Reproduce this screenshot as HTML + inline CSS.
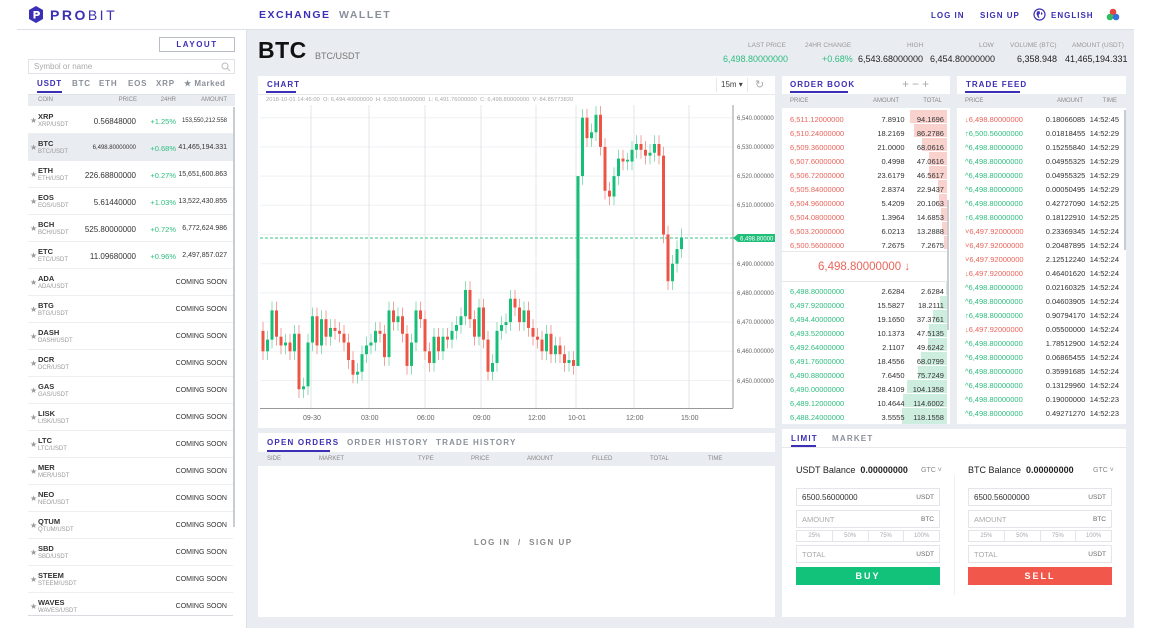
<!DOCTYPE html>
<html><head><meta charset="utf-8">
<style>
*{box-sizing:border-box;margin:0;padding:0}
body{width:1152px;height:628px;overflow:hidden;background:#fff;font-family:"Liberation Sans",sans-serif;color:#333;position:relative}
.a{position:absolute;white-space:nowrap}
.pur{color:#3b2fb5}
.gray{color:#999}
.bold{font-weight:bold}
.ls{letter-spacing:1.5px}
.panel{position:absolute;background:#fff}
.r{text-align:right}
.row{position:absolute;left:0;width:100%;font-size:7.5px}
.grn{color:#2ebd7f}.red{color:#e8645a}
</style></head><body>
<!-- header -->
<div class="a" style="left:17px;top:29px;width:1117px;height:1px;background:#dde0e6"></div>
<svg class="a" style="left:28px;top:6px" width="16" height="17" viewBox="0 0 16 17"><path d="M8 0L15 4V13L8 17L1 13V4Z" fill="#3b2fb5"/><path d="M5.5 5H9.5A2.5 2.5 0 0 1 9.5 10H7.5V12.5H5.5Z" fill="#fff"/><rect x="7.5" y="6.8" width="2" height="1.6" fill="#3b2fb5"/></svg>
<div class="a pur" style="left:50px;top:7px;font-size:14px;letter-spacing:2.5px"><b>PRO</b>BIT</div>
<div class="a pur bold ls" style="left:259px;top:9px;font-size:10.5px">EXCHANGE</div>
<div class="a bold ls" style="left:339px;top:9px;font-size:10.5px;color:#8a8f99">WALLET</div>
<div class="a pur bold" style="left:931px;top:11px;font-size:8px;letter-spacing:1px">LOG IN</div>
<div class="a pur bold" style="left:980px;top:11px;font-size:8px;letter-spacing:1px">SIGN UP</div>
<svg class="a" style="left:1033px;top:8px" width="13" height="13" viewBox="0 0 13 13"><circle cx="6.5" cy="6.5" r="5.5" fill="none" stroke="#3b2fb5" stroke-width="1.2"/><path d="M4 3.5L6.5 3L7 5.5L5.5 7L6.5 10L5 9.5L3.5 6Z" fill="#3b2fb5"/><path d="M8 4L9.5 5L9 7L8 6.5Z" fill="#3b2fb5"/></svg>
<div class="a pur bold" style="left:1051px;top:11px;font-size:8px;letter-spacing:1px">ENGLISH</div>
<svg class="a" style="left:1106px;top:8px" width="14" height="13"><circle cx="7" cy="4" r="3.3" fill="#e8453c"/><circle cx="4" cy="9" r="3.3" fill="#2ebd5f"/><circle cx="10" cy="9" r="3.3" fill="#3b6fd8"/></svg>

<!-- gray main -->
<div class="a" style="left:247px;top:30px;width:887px;height:598px;background:#e9ecf1"></div>
<div class="a" style="left:246px;top:30px;width:1px;height:598px;background:#dde0e6"></div>

<!-- sidebar -->
<div class="a pur bold" style="left:159px;top:37px;width:76px;height:15px;border:1px solid #b9bdc7;font-size:8px;letter-spacing:1.5px;text-align:center;line-height:13px">LAYOUT</div>
<div class="a" style="left:28px;top:59px;width:207px;height:15px;border:1px solid #dfe2e7;font-size:8px;color:#aaa;padding-left:5px;line-height:13px">Symbol or name</div>
<svg class="a" style="left:221px;top:62px" width="10" height="10"><circle cx="4" cy="4" r="3" fill="none" stroke="#bbb"/><path d="M6.3 6.3L9 9" stroke="#bbb"/></svg>
<div class="a bold" style="left:0;top:79px;font-size:8px;letter-spacing:0.8px;color:#8a8f99;width:246px;height:10px">
<span class="a pur" style="left:37px">USDT</span><span class="a" style="left:72px">BTC</span><span class="a" style="left:99px">ETH</span><span class="a" style="left:128px">EOS</span><span class="a" style="left:156px">XRP</span><span class="a" style="left:184px;letter-spacing:0.5px">★ Marked</span></div>
<div class="a" style="left:37px;top:91px;width:25px;height:2px;background:#3b2fb5"></div>
<div class="a" style="left:28px;top:94px;width:207px;height:1px;background:#dfe2e7"></div>
<div class="a" style="left:28px;top:95px;width:207px;height:11px;background:#e9ecf1;font-size:6px;color:#888">
<span class="a" style="left:10px;top:2px">COIN</span><span class="a" style="right:98px;top:2px">PRICE</span><span class="a" style="right:59px;top:2px">24HR</span><span class="a" style="right:8px;top:2px">AMOUNT</span></div>
<div class="a" style="left:233px;top:107px;width:2px;height:420px;background:#c8ccd3"></div>
<div class="a" style="left:28px;top:107px;width:205px;height:510px" id="side">
<div class="row" style="top:0;height:27px;border-bottom:1px solid #eceef1"><span class="a gray" style="left:2px;top:9px;font-size:8px">★</span><span class="a bold" style="left:10px;top:5px;font-size:7.5px;color:#333">XRP</span><span class="a gray" style="left:10px;top:15px;font-size:6px">XRP/USDT</span><span class="a" style="right:97px;top:10px;font-size:8px">0.56848000</span><span class="a grn" style="right:57px;top:10px;font-size:7.5px">+1.25%</span><span class="a" style="right:6px;top:11px;font-size:6px">153,550,212.558</span></div>
<div class="row" style="top:27px;height:27px;background:#e9ecf1"><span class="a gray" style="left:2px;top:9px;font-size:8px">★</span><span class="a bold" style="left:10px;top:5px;font-size:7.5px">BTC</span><span class="a gray" style="left:10px;top:15px;font-size:6px">BTC/USDT</span><span class="a" style="right:97px;top:11px;font-size:6px">6,498.80000000</span><span class="a grn" style="right:57px;top:10px;font-size:7.5px">+0.68%</span><span class="a" style="right:6px;top:10px;font-size:7px">41,465,194.331</span></div>
<div class="row" style="top:54px;height:27px;border-bottom:1px solid #eceef1"><span class="a gray" style="left:2px;top:9px;font-size:8px">★</span><span class="a bold" style="left:10px;top:5px;font-size:7.5px">ETH</span><span class="a gray" style="left:10px;top:15px;font-size:6px">ETH/USDT</span><span class="a" style="right:97px;top:10px;font-size:8px">226.68800000</span><span class="a grn" style="right:57px;top:10px;font-size:7.5px">+0.27%</span><span class="a" style="right:6px;top:10px;font-size:7px">15,651,600.863</span></div>
<div class="row" style="top:81px;height:27px;border-bottom:1px solid #eceef1"><span class="a gray" style="left:2px;top:9px;font-size:8px">★</span><span class="a bold" style="left:10px;top:5px;font-size:7.5px">EOS</span><span class="a gray" style="left:10px;top:15px;font-size:6px">EOS/USDT</span><span class="a" style="right:97px;top:10px;font-size:8px">5.61440000</span><span class="a grn" style="right:57px;top:10px;font-size:7.5px">+1.03%</span><span class="a" style="right:6px;top:10px;font-size:7px">13,522,430.855</span></div>
<div class="row" style="top:108px;height:27px;border-bottom:1px solid #eceef1"><span class="a gray" style="left:2px;top:9px;font-size:8px">★</span><span class="a bold" style="left:10px;top:5px;font-size:7.5px">BCH</span><span class="a gray" style="left:10px;top:15px;font-size:6px">BCH/USDT</span><span class="a" style="right:97px;top:10px;font-size:8px">525.80000000</span><span class="a grn" style="right:57px;top:10px;font-size:7.5px">+0.72%</span><span class="a" style="right:6px;top:10px;font-size:7px">6,772,624.986</span></div>
<div class="row" style="top:135px;height:27px;border-bottom:1px solid #eceef1"><span class="a gray" style="left:2px;top:9px;font-size:8px">★</span><span class="a bold" style="left:10px;top:5px;font-size:7.5px">ETC</span><span class="a gray" style="left:10px;top:15px;font-size:6px">ETC/USDT</span><span class="a" style="right:97px;top:10px;font-size:8px">11.09680000</span><span class="a grn" style="right:57px;top:10px;font-size:7.5px">+0.96%</span><span class="a" style="right:6px;top:10px;font-size:7px">2,497,857.027</span></div>
<div class="row" style="top:162px;height:27px;border-bottom:1px solid #eceef1"><span class="a gray" style="left:2px;top:9px;font-size:8px">★</span><span class="a bold" style="left:10px;top:5px;font-size:7.5px">ADA</span><span class="a gray" style="left:10px;top:15px;font-size:6px">ADA/USDT</span><span class="a" style="right:6px;top:10px;font-size:7px">COMING SOON</span></div>
<div class="row" style="top:189px;height:27px;border-bottom:1px solid #eceef1"><span class="a gray" style="left:2px;top:9px;font-size:8px">★</span><span class="a bold" style="left:10px;top:5px;font-size:7.5px">BTG</span><span class="a gray" style="left:10px;top:15px;font-size:6px">BTG/USDT</span><span class="a" style="right:6px;top:10px;font-size:7px">COMING SOON</span></div>
<div class="row" style="top:216px;height:27px;border-bottom:1px solid #eceef1"><span class="a gray" style="left:2px;top:9px;font-size:8px">★</span><span class="a bold" style="left:10px;top:5px;font-size:7.5px">DASH</span><span class="a gray" style="left:10px;top:15px;font-size:6px">DASH/USDT</span><span class="a" style="right:6px;top:10px;font-size:7px">COMING SOON</span></div>
<div class="row" style="top:243px;height:27px;border-bottom:1px solid #eceef1"><span class="a gray" style="left:2px;top:9px;font-size:8px">★</span><span class="a bold" style="left:10px;top:5px;font-size:7.5px">DCR</span><span class="a gray" style="left:10px;top:15px;font-size:6px">DCR/USDT</span><span class="a" style="right:6px;top:10px;font-size:7px">COMING SOON</span></div>
<div class="row" style="top:270px;height:27px;border-bottom:1px solid #eceef1"><span class="a gray" style="left:2px;top:9px;font-size:8px">★</span><span class="a bold" style="left:10px;top:5px;font-size:7.5px">GAS</span><span class="a gray" style="left:10px;top:15px;font-size:6px">GAS/USDT</span><span class="a" style="right:6px;top:10px;font-size:7px">COMING SOON</span></div>
<div class="row" style="top:297px;height:27px;border-bottom:1px solid #eceef1"><span class="a gray" style="left:2px;top:9px;font-size:8px">★</span><span class="a bold" style="left:10px;top:5px;font-size:7.5px">LISK</span><span class="a gray" style="left:10px;top:15px;font-size:6px">LISK/USDT</span><span class="a" style="right:6px;top:10px;font-size:7px">COMING SOON</span></div>
<div class="row" style="top:324px;height:27px;border-bottom:1px solid #eceef1"><span class="a gray" style="left:2px;top:9px;font-size:8px">★</span><span class="a bold" style="left:10px;top:5px;font-size:7.5px">LTC</span><span class="a gray" style="left:10px;top:15px;font-size:6px">LTC/USDT</span><span class="a" style="right:6px;top:10px;font-size:7px">COMING SOON</span></div>
<div class="row" style="top:351px;height:27px;border-bottom:1px solid #eceef1"><span class="a gray" style="left:2px;top:9px;font-size:8px">★</span><span class="a bold" style="left:10px;top:5px;font-size:7.5px">MER</span><span class="a gray" style="left:10px;top:15px;font-size:6px">MER/USDT</span><span class="a" style="right:6px;top:10px;font-size:7px">COMING SOON</span></div>
<div class="row" style="top:378px;height:27px;border-bottom:1px solid #eceef1"><span class="a gray" style="left:2px;top:9px;font-size:8px">★</span><span class="a bold" style="left:10px;top:5px;font-size:7.5px">NEO</span><span class="a gray" style="left:10px;top:15px;font-size:6px">NEO/USDT</span><span class="a" style="right:6px;top:10px;font-size:7px">COMING SOON</span></div>
<div class="row" style="top:405px;height:27px;border-bottom:1px solid #eceef1"><span class="a gray" style="left:2px;top:9px;font-size:8px">★</span><span class="a bold" style="left:10px;top:5px;font-size:7.5px">QTUM</span><span class="a gray" style="left:10px;top:15px;font-size:6px">QTUM/USDT</span><span class="a" style="right:6px;top:10px;font-size:7px">COMING SOON</span></div>
<div class="row" style="top:432px;height:27px;border-bottom:1px solid #eceef1"><span class="a gray" style="left:2px;top:9px;font-size:8px">★</span><span class="a bold" style="left:10px;top:5px;font-size:7.5px">SBD</span><span class="a gray" style="left:10px;top:15px;font-size:6px">SBD/USDT</span><span class="a" style="right:6px;top:10px;font-size:7px">COMING SOON</span></div>
<div class="row" style="top:459px;height:27px;border-bottom:1px solid #eceef1"><span class="a gray" style="left:2px;top:9px;font-size:8px">★</span><span class="a bold" style="left:10px;top:5px;font-size:7.5px">STEEM</span><span class="a gray" style="left:10px;top:15px;font-size:6px">STEEM/USDT</span><span class="a" style="right:6px;top:10px;font-size:7px">COMING SOON</span></div>
<div class="row" style="top:486px;height:23px;border-bottom:1px solid #d8dbe0"><span class="a gray" style="left:2px;top:9px;font-size:8px">★</span><span class="a bold" style="left:10px;top:5px;font-size:7.5px">WAVES</span><span class="a gray" style="left:10px;top:15px;font-size:6px">WAVES/USDT</span><span class="a" style="right:6px;top:10px;font-size:7px">COMING SOON</span></div>
</div>

<!-- title & stats -->
<div class="a bold" style="left:258px;top:37px;font-size:23px;letter-spacing:0.5px;color:#111">BTC</div>
<div class="a" style="left:315px;top:51px;font-size:9px;color:#777">BTC/USDT</div>
<div class="a gray" style="left:748px;top:42px;font-size:6.5px">LAST PRICE</div>
<div class="a grn" style="left:723px;top:54px;font-size:9px">6,498.80000000</div>
<div class="a gray" style="left:805px;top:42px;font-size:6.5px">24HR CHANGE</div>
<div class="a grn" style="left:822px;top:54px;font-size:9px">+0.68%</div>
<div class="a gray" style="left:907px;top:42px;font-size:6.5px">HIGH</div>
<div class="a" style="left:858px;top:54px;font-size:9px;color:#222">6,543.68000000</div>
<div class="a gray" style="left:979px;top:42px;font-size:6.5px">LOW</div>
<div class="a" style="left:930px;top:54px;font-size:9px;color:#222">6,454.80000000</div>
<div class="a gray" style="left:1010px;top:42px;font-size:6.5px">VOLUME (BTC)</div>
<div class="a" style="left:1017px;top:54px;font-size:9px;color:#222">6,358.948</div>
<div class="a gray" style="left:1072px;top:42px;font-size:6.5px">AMOUNT (USDT)</div>
<div class="a" style="left:1065px;top:54px;font-size:9px;color:#222">41,465,194.331</div>

<!-- chart panel -->
<div class="panel" style="left:258px;top:76px;width:517px;height:352px"></div>
<div class="a pur bold" style="left:267px;top:80px;font-size:8px;letter-spacing:1px">CHART</div>
<div class="a" style="left:266px;top:91px;width:30px;height:2px;background:#3b2fb5"></div>
<div class="a" style="left:258px;top:94px;width:517px;height:1px;background:#e6e8ec"></div>
<div class="a" style="left:716px;top:78px;width:32px;height:14px;border-left:1px solid #e6e8ec;border-right:1px solid #e6e8ec;font-size:8px;color:#444;padding-left:4px;line-height:14px">15m ▾</div>
<div class="a" style="left:755px;top:78px;font-size:11px;color:#aaa">↻</div>
<div class="a" style="left:266px;top:97px;font-size:5.8px;color:#aaa">2018-10-01 14:45:00&nbsp; O: 6,494.40000000&nbsp; H: 6,500.56000000&nbsp; L: 6,491.76000000&nbsp; C: 6,498.80000000&nbsp; V: 84.85773820</div>
<svg class="a" style="left:0;top:0" width="780" height="430">
<g stroke="#eef0f2" stroke-width="1">
<path d="M260 117.7H733M260 146.9H733M260 176.1H733M260 205.3H733M260 234.5H733M260 263.7H733M260 292.9H733M260 322.1H733M260 351.3H733M260 380.5H733"/>
<path d="M311 105V408M369 105V408M425 105V408M481 105V408M536 105V408M576 105V408M634 105V408M689 105V408" stroke="#e2e4e8"/>
</g>
<path d="M260 408.5H733M733 105V408" stroke="#999" stroke-width="1"/>
<g font-size="6px" fill="#666" font-family="Liberation Sans">
<text x="737" y="120">6,540.000000</text><text x="737" y="149">6,530.000000</text><text x="737" y="178">6,520.000000</text><text x="737" y="207">6,510.000000</text><text x="737" y="266">6,490.000000</text><text x="737" y="295">6,480.000000</text><text x="737" y="324">6,470.000000</text><text x="737" y="353">6,460.000000</text><text x="737" y="383">6,450.000000</text>
<text x="303" y="420" font-size="7px">09-30</text><text x="361" y="420" font-size="7px">03:00</text><text x="417" y="420" font-size="7px">06:00</text><text x="473" y="420" font-size="7px">09:00</text><text x="528" y="420" font-size="7px">12:00</text><text x="568" y="420" font-size="7px">10-01</text><text x="626" y="420" font-size="7px">12:00</text><text x="681" y="420" font-size="7px">15:00</text>
</g>
<path d="M260 238H733" stroke="#3cc48a" stroke-dasharray="3 2" stroke-width="1"/>
<path d="M733 238L738 234H775V242H738Z" fill="#1fbf7a"/>
<text x="740" y="240.5" font-size="6px" fill="#fff" font-family="Liberation Sans">6,498.80000</text>
<g transform="matrix(1 0 0 -2.92 0 19214.5)">
<path fill="none" stroke="#8fdcb8" stroke-width="1" vector-effect="non-scaling-stroke" d="M267.5 6457V6467M272 6461V6477M285.5 6459V6466M294.5 6457V6469M303.5 6444V6451M308 6445V6466M312.5 6460V6475M321.5 6459V6474M330.5 6462V6471M357.5 6449V6456M362 6450V6462M366.5 6456V6465M371 6459V6466M375.5 6460V6470M389 6455V6477M398 6467V6475M411.5 6452V6466M416 6460V6477M434 6453V6468M443 6457V6468M452 6461V6470M456.5 6464V6472M461 6466V6475M465.5 6469V6484M479 6462V6478M492.5 6450V6459M497 6453V6470M501.5 6464V6472M506 6466V6473M510.5 6467V6481M524 6467V6477M546.5 6457V6469M555.5 6456V6465M569 6453V6460M578 6455V6520M582.5 6517V6543M591.5 6530V6538M596 6532V6544M614 6510V6523M618.5 6517V6529M627.5 6522V6528M632 6522V6532M636.5 6526V6534M650 6524V6531M654.5 6525V6534M672.5 6481V6493M677 6487V6498M681.5 6492V6502"/>
<path fill="none" stroke="#f0a39c" stroke-width="1" vector-effect="non-scaling-stroke" d="M263 6457V6470M276.5 6462V6477M281 6459V6468M290 6457V6466M299 6444V6469M317 6459V6475M326 6462V6474M335 6464V6471M339.5 6463V6470M344 6460V6469M348.5 6454V6466M353 6449V6460M380 6463V6470M384.5 6455V6469M393.5 6467V6477M402.5 6463V6475M407 6452V6469M420.5 6468V6477M425 6457V6474M429.5 6453V6463M438.5 6457V6468M447.5 6461V6468M470 6468V6484M474.5 6462V6474M483.5 6461V6478M488 6450V6467M515 6472V6481M519.5 6467V6478M528.5 6465V6477M533 6462V6471M537.5 6461V6468M542 6457V6467M551 6456V6469M560 6456V6465M564.5 6453V6462M573.5 6452V6460M587 6530V6543M600.5 6527V6544M605 6512V6533M609.5 6510V6518M623 6522V6529M641 6526V6534M645.5 6524V6532M659 6524V6534M663.5 6497V6530M668 6481V6503"/>
<g fill="#16bf78">
<rect x="266" y="6460" width="3" height="4"/><rect x="270.5" y="6464" width="3" height="10"/><rect x="284" y="6462" width="3" height="1"/><rect x="293" y="6460" width="3" height="6"/><rect x="302" y="6447" width="3" height="1"/><rect x="306.5" y="6448" width="3" height="15"/><rect x="311" y="6463" width="3" height="9"/><rect x="320" y="6462" width="3" height="9"/><rect x="329" y="6465" width="3" height="3"/><rect x="356" y="6452" width="3" height="1"/><rect x="360.5" y="6453" width="3" height="6"/><rect x="365" y="6459" width="3" height="3"/><rect x="369.5" y="6462" width="3" height="1"/><rect x="374" y="6463" width="3" height="4"/><rect x="387.5" y="6458" width="3" height="16"/><rect x="396.5" y="6470" width="3" height="2"/><rect x="410" y="6455" width="3" height="8"/><rect x="414.5" y="6463" width="3" height="11"/><rect x="432.5" y="6456" width="3" height="9"/><rect x="441.5" y="6460" width="3" height="5"/><rect x="450.5" y="6464" width="3" height="3"/><rect x="455" y="6467" width="3" height="2"/><rect x="459.5" y="6469" width="3" height="3"/><rect x="464" y="6472" width="3" height="9"/><rect x="477.5" y="6465" width="3" height="10"/><rect x="491" y="6453" width="3" height="3"/><rect x="495.5" y="6456" width="3" height="11"/><rect x="500" y="6467" width="3" height="2"/><rect x="504.5" y="6469" width="3" height="1"/><rect x="509" y="6470" width="3" height="8"/><rect x="522.5" y="6470" width="3" height="4"/><rect x="545" y="6460" width="3" height="6"/><rect x="554" y="6459" width="3" height="3"/><rect x="567.5" y="6456" width="3" height="1"/><rect x="576.5" y="6455" width="3" height="65"/><rect x="581" y="6520" width="3" height="20"/><rect x="590" y="6533" width="3" height="2"/><rect x="594.5" y="6535" width="3" height="6"/><rect x="612.5" y="6513" width="3" height="7"/><rect x="617" y="6520" width="3" height="6"/><rect x="626" y="6525" width="3" height="0.6"/><rect x="630.5" y="6525" width="3" height="4"/><rect x="635" y="6529" width="3" height="2"/><rect x="648.5" y="6527" width="3" height="1"/><rect x="653" y="6528" width="3" height="3"/><rect x="671" y="6484" width="3" height="6"/><rect x="675.5" y="6490" width="3" height="5"/><rect x="680" y="6495" width="3" height="4"/>
</g>
<g fill="#ec5446">
<rect x="261.5" y="6460" width="3" height="7"/><rect x="275" y="6465" width="3" height="9"/><rect x="279.5" y="6462" width="3" height="3"/><rect x="288.5" y="6460" width="3" height="3"/><rect x="297.5" y="6447" width="3" height="19"/><rect x="315.5" y="6462" width="3" height="10"/><rect x="324.5" y="6465" width="3" height="6"/><rect x="333.5" y="6467" width="3" height="1"/><rect x="338" y="6466" width="3" height="1"/><rect x="342.5" y="6463" width="3" height="3"/><rect x="347" y="6457" width="3" height="6"/><rect x="351.5" y="6452" width="3" height="5"/><rect x="378.5" y="6466" width="3" height="1"/><rect x="383" y="6458" width="3" height="8"/><rect x="392" y="6470" width="3" height="4"/><rect x="401" y="6466" width="3" height="6"/><rect x="405.5" y="6455" width="3" height="11"/><rect x="419" y="6471" width="3" height="3"/><rect x="423.5" y="6460" width="3" height="11"/><rect x="428" y="6456" width="3" height="4"/><rect x="437" y="6460" width="3" height="5"/><rect x="446" y="6464" width="3" height="1"/><rect x="468.5" y="6471" width="3" height="10"/><rect x="473" y="6465" width="3" height="6"/><rect x="482" y="6464" width="3" height="11"/><rect x="486.5" y="6453" width="3" height="11"/><rect x="513.5" y="6475" width="3" height="3"/><rect x="518" y="6470" width="3" height="5"/><rect x="527" y="6468" width="3" height="6"/><rect x="531.5" y="6465" width="3" height="3"/><rect x="536" y="6464" width="3" height="1"/><rect x="540.5" y="6460" width="3" height="4"/><rect x="549.5" y="6459" width="3" height="7"/><rect x="558.5" y="6459" width="3" height="3"/><rect x="563" y="6456" width="3" height="3"/><rect x="572" y="6455" width="3" height="2"/><rect x="585.5" y="6533" width="3" height="7"/><rect x="599" y="6530" width="3" height="11"/><rect x="603.5" y="6515" width="3" height="15"/><rect x="608" y="6513" width="3" height="2"/><rect x="621.5" y="6525" width="3" height="1"/><rect x="639.5" y="6529" width="3" height="2"/><rect x="644" y="6527" width="3" height="2"/><rect x="657.5" y="6527" width="3" height="4"/><rect x="662" y="6500" width="3" height="27"/><rect x="666.5" y="6484" width="3" height="16"/>
</g>
</g>
</svg>

<!-- order book -->
<div class="panel" style="left:782px;top:76px;width:168px;height:348px"></div>
<div class="a pur bold" style="left:790px;top:80px;font-size:8px;letter-spacing:1px">ORDER BOOK</div>
<div class="a" style="left:790px;top:91px;width:58px;height:2px;background:#3b2fb5"></div>
<div class="a" style="left:902px;top:77px;font-size:12px;color:#aaa;letter-spacing:3px">+−+</div>
<div class="a" style="left:782px;top:94px;width:168px;height:14px;background:#e9ecf1;font-size:6px;color:#888"><span class="a" style="left:8px;top:4px">PRICE</span><span class="a" style="right:51px;top:4px">AMOUNT</span><span class="a" style="right:8px;top:4px">TOTAL</span></div>
<div class="a" style="left:947px;top:200px;width:2px;height:130px;background:#c8ccd3"></div>
<svg class="a" style="left:782px;top:108px" width="168" height="316">
<g fill="#f9d2ce"><rect x="128" y="2" width="37" height="13"/><rect x="132" y="16" width="33" height="13"/><rect x="140" y="30" width="25" height="13"/><rect x="147" y="44" width="18" height="13"/><rect x="147" y="58" width="18" height="13"/><rect x="156" y="72" width="9" height="13"/><rect x="157" y="86" width="8" height="13"/><rect x="159" y="100" width="6" height="13"/><rect x="160" y="114" width="5" height="13"/><rect x="162" y="128" width="3" height="13"/></g>
<g fill="#cdeede"><rect x="164" y="174" width="1" height="13"/><rect x="158" y="188" width="7" height="13"/><rect x="151" y="202" width="14" height="13"/><rect x="147" y="216" width="18" height="13"/><rect x="146" y="230" width="19" height="13"/><rect x="139" y="244" width="26" height="13"/><rect x="136" y="258" width="29" height="13"/><rect x="125" y="272" width="40" height="13"/><rect x="121" y="286" width="44" height="13"/><rect x="120" y="300" width="45" height="16"/></g>
</svg>
<div class="a" style="left:782px;top:113px;width:162px;font-size:7.5px;line-height:14px">
<div style="display:flex;justify-content:space-between;padding-left:8px"><span class="red" style="width:80px">6,511.12000000</span><span style="width:36px;text-align:right">7.8910</span><span style="width:40px;text-align:right">94.1696</span></div>
<div style="display:flex;justify-content:space-between;padding-left:8px"><span class="red" style="width:80px">6,510.24000000</span><span style="width:36px;text-align:right">18.2169</span><span style="width:40px;text-align:right">86.2786</span></div>
<div style="display:flex;justify-content:space-between;padding-left:8px"><span class="red" style="width:80px">6,509.36000000</span><span style="width:36px;text-align:right">21.0000</span><span style="width:40px;text-align:right">68.0616</span></div>
<div style="display:flex;justify-content:space-between;padding-left:8px"><span class="red" style="width:80px">6,507.60000000</span><span style="width:36px;text-align:right">0.4998</span><span style="width:40px;text-align:right">47.0616</span></div>
<div style="display:flex;justify-content:space-between;padding-left:8px"><span class="red" style="width:80px">6,506.72000000</span><span style="width:36px;text-align:right">23.6179</span><span style="width:40px;text-align:right">46.5617</span></div>
<div style="display:flex;justify-content:space-between;padding-left:8px"><span class="red" style="width:80px">6,505.84000000</span><span style="width:36px;text-align:right">2.8374</span><span style="width:40px;text-align:right">22.9437</span></div>
<div style="display:flex;justify-content:space-between;padding-left:8px"><span class="red" style="width:80px">6,504.96000000</span><span style="width:36px;text-align:right">5.4209</span><span style="width:40px;text-align:right">20.1063</span></div>
<div style="display:flex;justify-content:space-between;padding-left:8px"><span class="red" style="width:80px">6,504.08000000</span><span style="width:36px;text-align:right">1.3964</span><span style="width:40px;text-align:right">14.6853</span></div>
<div style="display:flex;justify-content:space-between;padding-left:8px"><span class="red" style="width:80px">6,503.20000000</span><span style="width:36px;text-align:right">6.0213</span><span style="width:40px;text-align:right">13.2888</span></div>
<div style="display:flex;justify-content:space-between;padding-left:8px"><span class="red" style="width:80px">6,500.56000000</span><span style="width:36px;text-align:right">7.2675</span><span style="width:40px;text-align:right">7.2675</span></div>
</div>
<div class="a" style="left:782px;top:251px;width:165px;height:1px;background:#e6e8ec"></div>
<div class="a" style="left:782px;top:281px;width:165px;height:1px;background:#e6e8ec"></div>
<div class="a red" style="left:818px;top:261px;font-size:11.5px">6,498.80000000 <b>↓</b></div>
<div class="a" style="left:782px;top:285px;width:162px;font-size:7.5px;line-height:14px">
<div style="display:flex;justify-content:space-between;padding-left:8px"><span class="grn" style="width:80px">6,498.80000000</span><span style="width:36px;text-align:right">2.6284</span><span style="width:40px;text-align:right">2.6284</span></div>
<div style="display:flex;justify-content:space-between;padding-left:8px"><span class="grn" style="width:80px">6,497.92000000</span><span style="width:36px;text-align:right">15.5827</span><span style="width:40px;text-align:right">18.2111</span></div>
<div style="display:flex;justify-content:space-between;padding-left:8px"><span class="grn" style="width:80px">6,494.40000000</span><span style="width:36px;text-align:right">19.1650</span><span style="width:40px;text-align:right">37.3761</span></div>
<div style="display:flex;justify-content:space-between;padding-left:8px"><span class="grn" style="width:80px">6,493.52000000</span><span style="width:36px;text-align:right">10.1373</span><span style="width:40px;text-align:right">47.5135</span></div>
<div style="display:flex;justify-content:space-between;padding-left:8px"><span class="grn" style="width:80px">6,492.64000000</span><span style="width:36px;text-align:right">2.1107</span><span style="width:40px;text-align:right">49.6242</span></div>
<div style="display:flex;justify-content:space-between;padding-left:8px"><span class="grn" style="width:80px">6,491.76000000</span><span style="width:36px;text-align:right">18.4556</span><span style="width:40px;text-align:right">68.0799</span></div>
<div style="display:flex;justify-content:space-between;padding-left:8px"><span class="grn" style="width:80px">6,490.88000000</span><span style="width:36px;text-align:right">7.6450</span><span style="width:40px;text-align:right">75.7249</span></div>
<div style="display:flex;justify-content:space-between;padding-left:8px"><span class="grn" style="width:80px">6,490.00000000</span><span style="width:36px;text-align:right">28.4109</span><span style="width:40px;text-align:right">104.1358</span></div>
<div style="display:flex;justify-content:space-between;padding-left:8px"><span class="grn" style="width:80px">6,489.12000000</span><span style="width:36px;text-align:right">10.4644</span><span style="width:40px;text-align:right">114.6002</span></div>
<div style="display:flex;justify-content:space-between;padding-left:8px"><span class="grn" style="width:80px">6,488.24000000</span><span style="width:36px;text-align:right">3.5555</span><span style="width:40px;text-align:right">118.1558</span></div>
</div>

<!-- trade feed -->
<div class="panel" style="left:957px;top:76px;width:169px;height:348px;overflow:hidden">
<div class="a pur bold" style="left:9px;top:4px;font-size:8px;letter-spacing:1px">TRADE FEED</div>
<div class="a" style="left:8px;top:15px;width:55px;height:2px;background:#3b2fb5"></div>
<div class="a" style="left:0;top:18px;width:169px;height:14px;background:#e9ecf1;font-size:6px;color:#888"><span class="a" style="left:8px;top:4px">PRICE</span><span class="a" style="right:43px;top:4px">AMOUNT</span><span class="a" style="right:9px;top:4px">TIME</span></div>
<div class="a" style="left:167px;top:34px;width:2px;height:140px;background:#c8ccd3"></div>
<div class="a" style="left:0;top:37px;width:162px;font-size:7.5px;line-height:14px">
<div style="display:flex;padding-left:8px"><span class="red" style="width:80px">↓6,498.80000000</span><span style="width:45px;text-align:right">0.18066085</span><span style="width:35px;text-align:right">14:52:45</span></div>
<div style="display:flex;padding-left:8px"><span class="grn" style="width:80px">↑6,500.56000000</span><span style="width:45px;text-align:right">0.01818455</span><span style="width:35px;text-align:right">14:52:29</span></div>
<div style="display:flex;padding-left:8px"><span class="grn" style="width:80px">^6,498.80000000</span><span style="width:45px;text-align:right">0.15255840</span><span style="width:35px;text-align:right">14:52:29</span></div>
<div style="display:flex;padding-left:8px"><span class="grn" style="width:80px">^6,498.80000000</span><span style="width:45px;text-align:right">0.04955325</span><span style="width:35px;text-align:right">14:52:29</span></div>
<div style="display:flex;padding-left:8px"><span class="grn" style="width:80px">^6,498.80000000</span><span style="width:45px;text-align:right">0.04955325</span><span style="width:35px;text-align:right">14:52:29</span></div>
<div style="display:flex;padding-left:8px"><span class="grn" style="width:80px">^6,498.80000000</span><span style="width:45px;text-align:right">0.00050495</span><span style="width:35px;text-align:right">14:52:29</span></div>
<div style="display:flex;padding-left:8px"><span class="grn" style="width:80px">^6,498.80000000</span><span style="width:45px;text-align:right">0.42727090</span><span style="width:35px;text-align:right">14:52:25</span></div>
<div style="display:flex;padding-left:8px"><span class="grn" style="width:80px">↑6,498.80000000</span><span style="width:45px;text-align:right">0.18122910</span><span style="width:35px;text-align:right">14:52:25</span></div>
<div style="display:flex;padding-left:8px"><span class="red" style="width:80px">˅6,497.92000000</span><span style="width:45px;text-align:right">0.23369345</span><span style="width:35px;text-align:right">14:52:24</span></div>
<div style="display:flex;padding-left:8px"><span class="red" style="width:80px">˅6,497.92000000</span><span style="width:45px;text-align:right">0.20487895</span><span style="width:35px;text-align:right">14:52:24</span></div>
<div style="display:flex;padding-left:8px"><span class="red" style="width:80px">˅6,497.92000000</span><span style="width:45px;text-align:right">2.12512240</span><span style="width:35px;text-align:right">14:52:24</span></div>
<div style="display:flex;padding-left:8px"><span class="red" style="width:80px">↓6,497.92000000</span><span style="width:45px;text-align:right">0.46401620</span><span style="width:35px;text-align:right">14:52:24</span></div>
<div style="display:flex;padding-left:8px"><span class="grn" style="width:80px">^6,498.80000000</span><span style="width:45px;text-align:right">0.02160325</span><span style="width:35px;text-align:right">14:52:24</span></div>
<div style="display:flex;padding-left:8px"><span class="grn" style="width:80px">^6,498.80000000</span><span style="width:45px;text-align:right">0.04603905</span><span style="width:35px;text-align:right">14:52:24</span></div>
<div style="display:flex;padding-left:8px"><span class="grn" style="width:80px">↑6,498.80000000</span><span style="width:45px;text-align:right">0.90794170</span><span style="width:35px;text-align:right">14:52:24</span></div>
<div style="display:flex;padding-left:8px"><span class="red" style="width:80px">↓6,497.92000000</span><span style="width:45px;text-align:right">0.05500000</span><span style="width:35px;text-align:right">14:52:24</span></div>
<div style="display:flex;padding-left:8px"><span class="grn" style="width:80px">^6,498.80000000</span><span style="width:45px;text-align:right">1.78512900</span><span style="width:35px;text-align:right">14:52:24</span></div>
<div style="display:flex;padding-left:8px"><span class="grn" style="width:80px">^6,498.80000000</span><span style="width:45px;text-align:right">0.06865455</span><span style="width:35px;text-align:right">14:52:24</span></div>
<div style="display:flex;padding-left:8px"><span class="grn" style="width:80px">^6,498.80000000</span><span style="width:45px;text-align:right">0.35991685</span><span style="width:35px;text-align:right">14:52:24</span></div>
<div style="display:flex;padding-left:8px"><span class="grn" style="width:80px">^6,498.80000000</span><span style="width:45px;text-align:right">0.13129960</span><span style="width:35px;text-align:right">14:52:24</span></div>
<div style="display:flex;padding-left:8px"><span class="grn" style="width:80px">^6,498.80000000</span><span style="width:45px;text-align:right">0.19000000</span><span style="width:35px;text-align:right">14:52:23</span></div>
<div style="display:flex;padding-left:8px"><span class="grn" style="width:80px">^6,498.80000000</span><span style="width:45px;text-align:right">0.49271270</span><span style="width:35px;text-align:right">14:52:23</span></div>
<div style="display:flex;padding-left:8px"><span class="grn" style="width:80px">^6,498.80000000</span><span style="width:45px;text-align:right">0.78591270</span><span style="width:35px;text-align:right">14:52:23</span></div>
</div>
</div>

<!-- open orders -->
<div class="panel" style="left:258px;top:433px;width:517px;height:184px">
<div class="a pur bold" style="left:9px;top:5px;font-size:8px;letter-spacing:1.2px">OPEN ORDERS</div>
<div class="a bold" style="left:89px;top:5px;font-size:8px;letter-spacing:1.2px;color:#8a8f99">ORDER HISTORY</div>
<div class="a bold" style="left:178px;top:5px;font-size:8px;letter-spacing:1.2px;color:#8a8f99">TRADE HISTORY</div>
<div class="a" style="left:9px;top:17px;width:63px;height:2px;background:#3b2fb5"></div>
<div class="a" style="left:0;top:19px;width:517px;height:14px;background:#e9ecf1;font-size:6px;color:#888"><span class="a" style="left:9px;top:4px">SIDE</span><span class="a" style="left:61px;top:4px">MARKET</span><span class="a" style="left:160px;top:4px">TYPE</span><span class="a" style="left:213px;top:4px">PRICE</span><span class="a" style="left:269px;top:4px">AMOUNT</span><span class="a" style="left:334px;top:4px">FILLED</span><span class="a" style="left:392px;top:4px">TOTAL</span><span class="a" style="left:450px;top:4px">TIME</span></div>
<div class="a bold" style="left:216px;top:105px;font-size:8px;letter-spacing:1.5px;color:#888">LOG IN &nbsp;/&nbsp; SIGN UP</div>
</div>

<!-- limit panel -->
<div class="panel" style="left:782px;top:429px;width:344px;height:188px">
<div class="a pur bold" style="left:9px;top:5px;font-size:8px;letter-spacing:1.2px">LIMIT</div>
<div class="a bold" style="left:50px;top:5px;font-size:8px;letter-spacing:1.2px;color:#8a8f99">MARKET</div>
<div class="a" style="left:9px;top:16px;width:25px;height:2px;background:#3b2fb5"></div>
<div class="a" style="left:0;top:18px;width:344px;height:1px;background:#e6e8ec"></div>
<div class="a" style="left:172px;top:46px;width:1px;height:120px;background:#eceef1"></div>
</div>
<div class="a" style="left:796px;top:465px;font-size:9px;color:#222">USDT Balance&nbsp; <b>0.00000000</b></div>
<div class="a" style="left:921px;top:467px;font-size:7px;color:#888">GTC ˅</div>
<div class="a" style="left:968px;top:465px;font-size:9px;color:#222">BTC Balance&nbsp; <b>0.00000000</b></div>
<div class="a" style="left:1093px;top:467px;font-size:7px;color:#888">GTC ˅</div>

<div class="a" style="left:796px;top:488px;width:144px;height:97px">
<div class="a" style="left:0;top:0;width:144px;height:18px;border:1px solid #e3e5ea;font-size:8px;padding:4px 5px;color:#333">6500.56000000<span style="float:right;font-size:6.5px;color:#666;margin-top:1px">USDT</span></div>
<div class="a" style="left:0;top:22px;width:144px;height:18px;border:1px solid #e3e5ea;font-size:7.5px;padding:4px 5px;color:#aaa">AMOUNT<span style="float:right;font-size:6.5px;color:#666;margin-top:1px">BTC</span></div>
<div class="a" style="left:0;top:42px;width:144px;height:12px;border:1px solid #e3e5ea;font-size:6px;color:#aaa;display:flex"><span style="flex:1;text-align:center;border-right:1px solid #e3e5ea;line-height:10px">25%</span><span style="flex:1;text-align:center;border-right:1px solid #e3e5ea;line-height:10px">50%</span><span style="flex:1;text-align:center;border-right:1px solid #e3e5ea;line-height:10px">75%</span><span style="flex:1;text-align:center;line-height:10px">100%</span></div>
<div class="a" style="left:0;top:57px;width:144px;height:18px;border:1px solid #e3e5ea;font-size:7.5px;padding:4px 5px;color:#aaa">TOTAL<span style="float:right;font-size:6.5px;color:#666;margin-top:1px">USDT</span></div>
<div class="a bold" style="left:0;top:79px;width:144px;height:18px;background:#12c27b;color:#fff;font-size:9px;letter-spacing:2px;text-align:center;line-height:18px">BUY</div>
</div>
<div class="a" style="left:968px;top:488px;width:144px;height:97px">
<div class="a" style="left:0;top:0;width:144px;height:18px;border:1px solid #e3e5ea;font-size:8px;padding:4px 5px;color:#333">6500.56000000<span style="float:right;font-size:6.5px;color:#666;margin-top:1px">USDT</span></div>
<div class="a" style="left:0;top:22px;width:144px;height:18px;border:1px solid #e3e5ea;font-size:7.5px;padding:4px 5px;color:#aaa">AMOUNT<span style="float:right;font-size:6.5px;color:#666;margin-top:1px">BTC</span></div>
<div class="a" style="left:0;top:42px;width:144px;height:12px;border:1px solid #e3e5ea;font-size:6px;color:#aaa;display:flex"><span style="flex:1;text-align:center;border-right:1px solid #e3e5ea;line-height:10px">25%</span><span style="flex:1;text-align:center;border-right:1px solid #e3e5ea;line-height:10px">50%</span><span style="flex:1;text-align:center;border-right:1px solid #e3e5ea;line-height:10px">75%</span><span style="flex:1;text-align:center;line-height:10px">100%</span></div>
<div class="a" style="left:0;top:57px;width:144px;height:18px;border:1px solid #e3e5ea;font-size:7.5px;padding:4px 5px;color:#aaa">TOTAL<span style="float:right;font-size:6.5px;color:#666;margin-top:1px">USDT</span></div>
<div class="a bold" style="left:0;top:79px;width:144px;height:18px;background:#f1574b;color:#fff;font-size:9px;letter-spacing:2px;text-align:center;line-height:18px">SELL</div>
</div>
<div class="a" style="left:1134px;top:30px;width:18px;height:598px;background:#fff"></div>
</body></html>
